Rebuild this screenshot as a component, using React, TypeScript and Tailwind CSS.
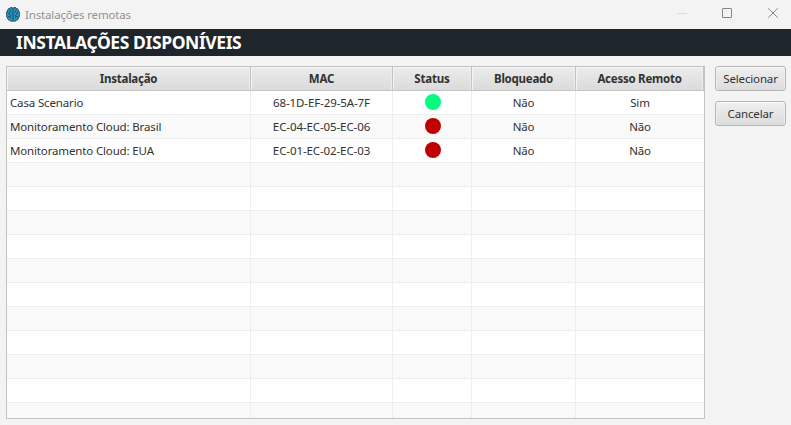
const COLS = 'grid grid-cols-[244px_142px_79px_104px_128px]';

type Installation = { name: string; mac: string; online: boolean; blocked: string; remote: string };

const installations: Installation[] = [
  { name: 'Casa Scenario', mac: '68-1D-EF-29-5A-7F', online: true, blocked: 'Não', remote: 'Sim' },
  { name: 'Monitoramento Cloud: Brasil', mac: 'EC-04-EC-05-EC-06', online: false, blocked: 'Não', remote: 'Não' },
  { name: 'Monitoramento Cloud: EUA', mac: 'EC-01-EC-02-EC-03', online: false, blocked: 'Não', remote: 'Não' },
];

const headers = [
  { label: 'Instalação', spacing: 'tracking-[-0.25px]' },
  { label: 'MAC', spacing: 'tracking-[-0.1px]' },
  { label: 'Status', spacing: 'tracking-[-0.2px]' },
  { label: 'Bloqueado', spacing: 'tracking-[-0.25px]' },
  { label: 'Acesso Remoto', spacing: 'tracking-[-0.25px]' },
];

function BrainIcon() {
  return (
    <svg width="14" height="15" viewBox="0 0 14 15" fill="none">
      <path
        d="M6.8 1.2C5.5.2 4 .6 3.4 1.6 2 1.8 1.3 3 1.5 4.1.4 5 .2 6.5.7 7.5c-.5 1.3-.1 2.6.8 3.3 0 1.300.9 2.300 2.200 2.400.8 1.200 2.300 1.300 3.300.5 1 .8 2.500.7 3.300-.5 1.300-.1 2.200-1.100 2.200-2.400.9-.7 1.300-2 .8-3.300.5-1 .3-2.500-.8-3.400.2-1.100-.5-2.300-1.900-2.500C10 .6 8.200.2 7 1.200Z"
        fill="#219ac6"
        stroke="#263846"
        strokeWidth="1"
      />
      <path
        d="M7 1.500v12M4 2.500v2l1.500 1M1.800 5.500l1.700.8v1.500M5.500 7.500 4 9.500l-2 .3M4 9.500l1 2M10 2.500v2l-1.500 1M12.200 5.500l-1.700.8v1.500M8.500 7.500l1.500 2 2 .3M10 9.500l-1 2"
        stroke="#263846"
        strokeWidth=".8"
      />
    </svg>
  );
}

function Row({ item, odd }: { item?: Installation; odd: boolean }) {
  const cell = 'flex h-6 items-center justify-center border-r border-b border-[#ededed]';
  return (
    <div className={`${COLS} shrink-0 ${odd ? 'bg-[#f9f9f9]' : 'bg-white'}`}>
      <div className={`${cell} !justify-start pl-[3px]`}>{item?.name}</div>
      <div className={`${cell} tracking-[-0.1px]`}>{item?.mac}</div>
      <div className={`${cell} pl-[2px]`}>
        {item && <span className={`mb-px size-4 rounded-full ${item.online ? 'bg-[#00ff7f]' : 'bg-[#be0000]'}`} />}
      </div>
      <div className={cell}>{item?.blocked}</div>
      <div className="flex h-6 items-center justify-center border-b border-[#ededed]">{item?.remote}</div>
    </div>
  );
}

function ActionButton({ children }: { children: string }) {
  return (
    <button className="flex h-[25px] w-[71px] items-center justify-center rounded-[3px] border border-[#b5b5b5] bg-linear-to-b from-[#f0f0f0] to-[#dcdcdc] shadow-[inset_0_1px_0_#fbfbfb,inset_1px_0_0_#efefef,inset_-1px_0_0_#efefef]">
      {children}
    </button>
  );
}

export default function App() {
  return (
    <div className="flex h-[425px] w-[791px] flex-col overflow-hidden bg-[#f3f3f3] font-['Noto_Sans','Open_Sans',sans-serif] text-[11.5px] tracking-[-0.15px] whitespace-nowrap text-[#323232]">
      <header className="flex h-[29px] shrink-0 items-center pl-[6px]">
        <BrainIcon />
        <span className="ml-[5px] text-[11.5px] text-[#929292]">Instalações remotas</span>
        <div className="ml-auto flex items-center pr-[13px] pb-[3px]">
          <span className="h-px w-[10px] bg-[#dcdcdc]" />
          <span className="ml-[35px] size-[10px] rounded-[1px] border border-[#858585]" />
          <svg className="ml-[36px]" width="10" height="10" viewBox="0 0 10 10">
            <path d="M.3.3l9.400 9.400M9.700.3.3 9.700" stroke="#858585" strokeWidth="1" />
          </svg>
        </div>
      </header>
      <h1 className="flex h-[27px] shrink-0 items-center bg-[#1e262c] pl-4 text-[17.5px] font-bold tracking-[-0.4px] text-white">
        INSTALAÇÕES DISPONÍVEIS
      </h1>
      <main className="flex pt-[10px] pl-[6px]">
        <section className="flex h-[353px] w-[699px] flex-col overflow-hidden border border-[#c3c3c3]">
          <div className={`${COLS} h-6 shrink-0 bg-linear-to-b from-[#ececec] to-[#dadada] font-bold`}>
            {headers.map((h) => (
              <div
                key={h.label}
                className={`flex h-6 items-center justify-center border-r border-b border-[#c3c3c3] shadow-[inset_1px_1px_0_#f4f4f4,inset_-1px_0_0_#ededed] ${h.spacing}`}
              >
                {h.label}
              </div>
            ))}
          </div>
          {Array.from({ length: 14 }, (_, i) => (
            <Row key={i} item={installations[i]} odd={i % 2 === 1} />
          ))}
        </section>
        <aside className="ml-[10px] flex flex-col gap-[10px]">
          <ActionButton>Selecionar</ActionButton>
          <ActionButton>Cancelar</ActionButton>
        </aside>
      </main>
    </div>
  );
}
